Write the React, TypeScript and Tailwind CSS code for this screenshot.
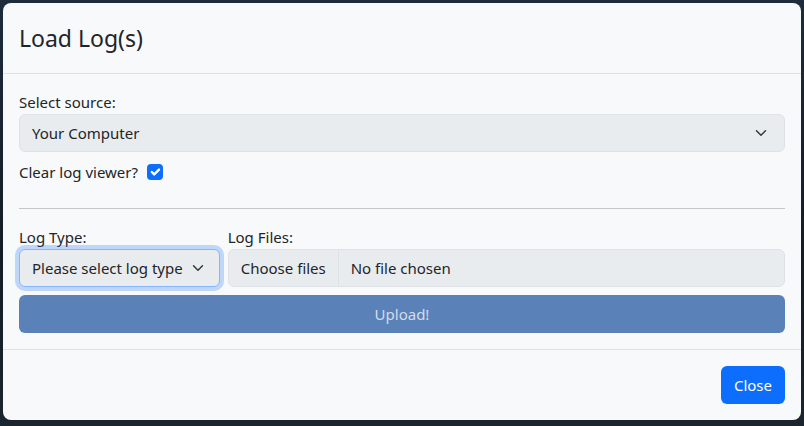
import React from "react";

function Chevron() {
  return (
    <svg width="16" height="12" viewBox="0 0 16 16" fill="none" className="shrink-0">
      <path d="m2 5 6 6 6-6" stroke="#343a40" strokeWidth="2" strokeLinecap="round" strokeLinejoin="round" />
    </svg>
  );
}

export default function App() {
  return (
    <main
      className="w-[804px] h-[426px] p-[3px] bg-[linear-gradient(180deg,#1d2b3b_0%,#141c26_60%,#1a2530_100%)]"
      style={{ fontFamily: '"Noto Sans", "Open Sans", sans-serif' }}
    >
      <div className="h-[417px] bg-[#f8f9fa] rounded-[8px] flex flex-col text-[#212529] overflow-hidden">
        {/* header */}
        <div className="px-4 pt-[17px] pb-[17px] border-b border-[#dee2e6]">
          <h4 className="text-[23px] leading-[36px] font-normal">Load Log(s)</h4>
        </div>

        {/* body */}
        <div className="p-4 flex flex-col text-[15px] leading-[24px]">
          <label>Select source:</label>
          <div className="h-[38px] flex items-center justify-between pl-[12px] pr-[15px] bg-[#e9ecef] border border-[#dee2e6] rounded-[6px]">
            <span>Your Computer</span>
            <Chevron />
          </div>

          <div className="mt-2 flex items-center gap-[9px]">
            <span>Clear log viewer?</span>
            <span className="w-4 h-4 rounded-[4px] bg-[#0d6efd] flex items-center justify-center">
              <svg width="16" height="16" viewBox="0 0 20 20" fill="none">
                <path d="m6 10 3 3 6-6" stroke="#fff" strokeWidth="3" strokeLinecap="round" strokeLinejoin="round" />
              </svg>
            </span>
          </div>

          <hr className="mt-6 border-0 h-px bg-[#c4c6c8]" />

          <div className="mt-4 flex gap-2">
            <div className="flex flex-col">
              <label>Log Type:</label>
              <div className="h-[38px] flex items-center gap-[7px] pl-[12px] pr-[13px] bg-[#e9ecef] border border-[#86b7fe] rounded-[6px] ring-4 ring-[#0d6efd]/25">
                <span>Please select log type</span>
                <Chevron />
              </div>
            </div>
            <div className="flex-1 flex flex-col">
              <label>Log Files:</label>
              <div className="h-[38px] flex items-stretch bg-[#e9ecef] border border-[#dee2e6] rounded-[6px]">
                <span className="flex items-center px-3 border-r border-[#dee2e6]">Choose files</span>
                <span className="flex items-center px-3">No file chosen</span>
              </div>
            </div>
          </div>

          <button className="mt-2 h-[38px] rounded-[6px] bg-[#5b82b8] text-[#d3dcea]">Upload!</button>
        </div>

        {/* footer */}
        <div className="mt-auto border-t border-[#dee2e6] px-4 py-4 flex justify-end">
          <button className="h-[38px] px-[13px] rounded-[6px] bg-[#0d6efd] text-white text-[15px]">Close</button>
        </div>
      </div>
    </main>
  );
}
